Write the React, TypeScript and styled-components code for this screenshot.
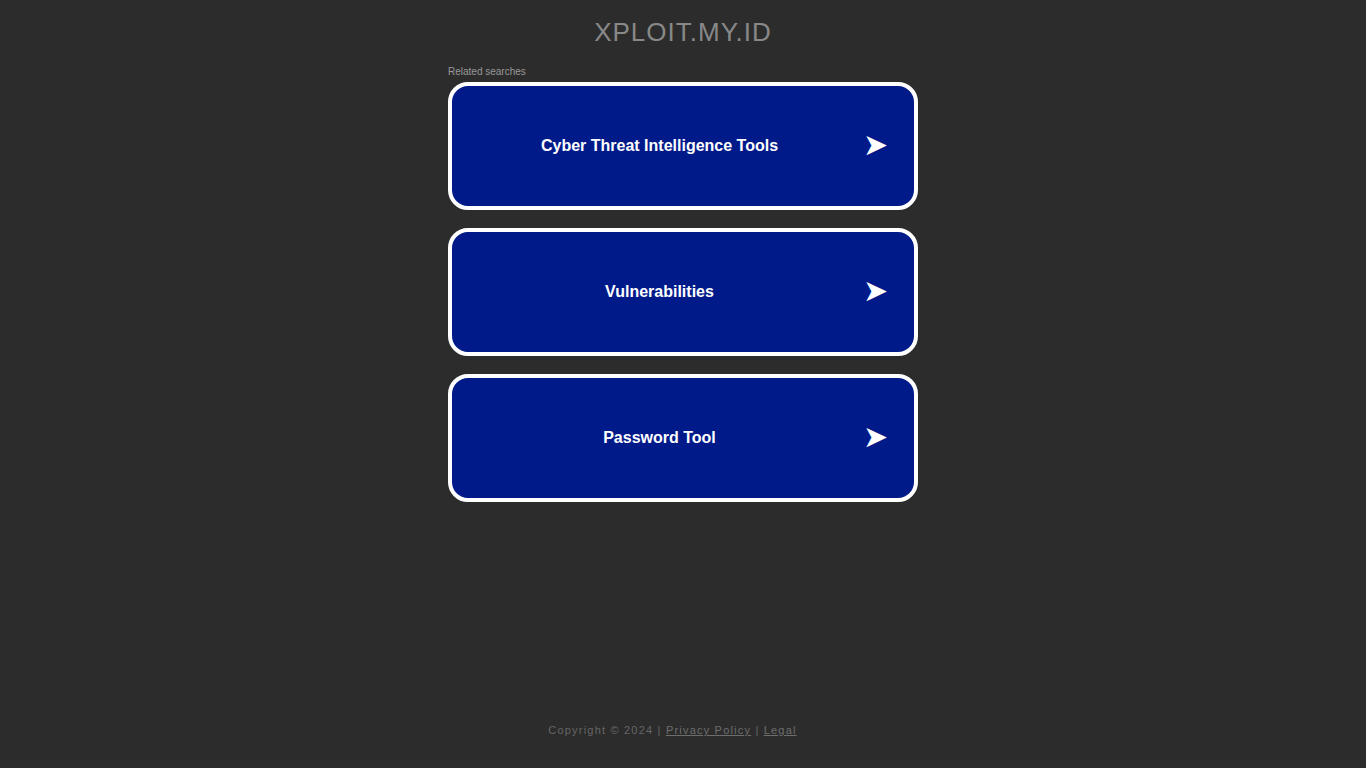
import styled, { createGlobalStyle } from 'styled-components';

const GlobalStyle = createGlobalStyle`
  html, body { margin: 0; padding: 0; background: #2c2c2c; }
  body { font-family: "Liberation Sans", Arial, sans-serif; }
`;

const Page = styled.div`
  min-height: 100vh;
  display: flex;
  flex-direction: column;
  align-items: center;
`;

const Title = styled.h1`
  margin: 16px 0 0;
  font-size: 26px;
  font-weight: normal;
  letter-spacing: 1px;
  line-height: 32px;
  color: #888;
`;

const Related = styled.section`
  width: 470px;
  margin-top: 18px;
`;

const Caption = styled.div`
  font-size: 10px;
  line-height: 12px;
  color: #999;
  margin-bottom: 4px;
`;

const Card = styled.a`
  display: flex;
  align-items: center;
  box-sizing: border-box;
  height: 128px;
  margin-bottom: 18px;
  border: 4px solid #fff;
  border-radius: 20px;
  background: #011a8a;
  color: #fff;
  text-decoration: none;
`;

const CardText = styled.span`
  flex: 1;
  text-align: center;
  font-size: 16px;
  font-weight: bold;
  padding-left: 4px;
`;

const Arrow = styled.span`
  font-size: 30px;
  line-height: 1;
  padding-right: 26px;
  margin-bottom: 2px;
`;

const Footer = styled.footer`
  margin-top: auto;
  padding: 0 21px 32px 0;
  font-size: 11px;
  letter-spacing: 1.2px;
  color: #666;
  a { color: #6e6e6e; }
`;

const searches = ['Cyber Threat Intelligence Tools', 'Vulnerabilities', 'Password Tool'];

export default function App() {
  return (
    <>
      <GlobalStyle />
      <Page>
        <Title>XPLOIT.MY.ID</Title>
        <Related>
          <Caption>Related searches</Caption>
          {searches.map((s) => (
            <Card key={s} href="#">
              <CardText>{s}</CardText>
              <Arrow>➤</Arrow>
            </Card>
          ))}
        </Related>
        <Footer>
          Copyright © 2024 | <a href="#">Privacy Policy</a> | <a href="#">Legal</a>
        </Footer>
      </Page>
    </>
  );
}
